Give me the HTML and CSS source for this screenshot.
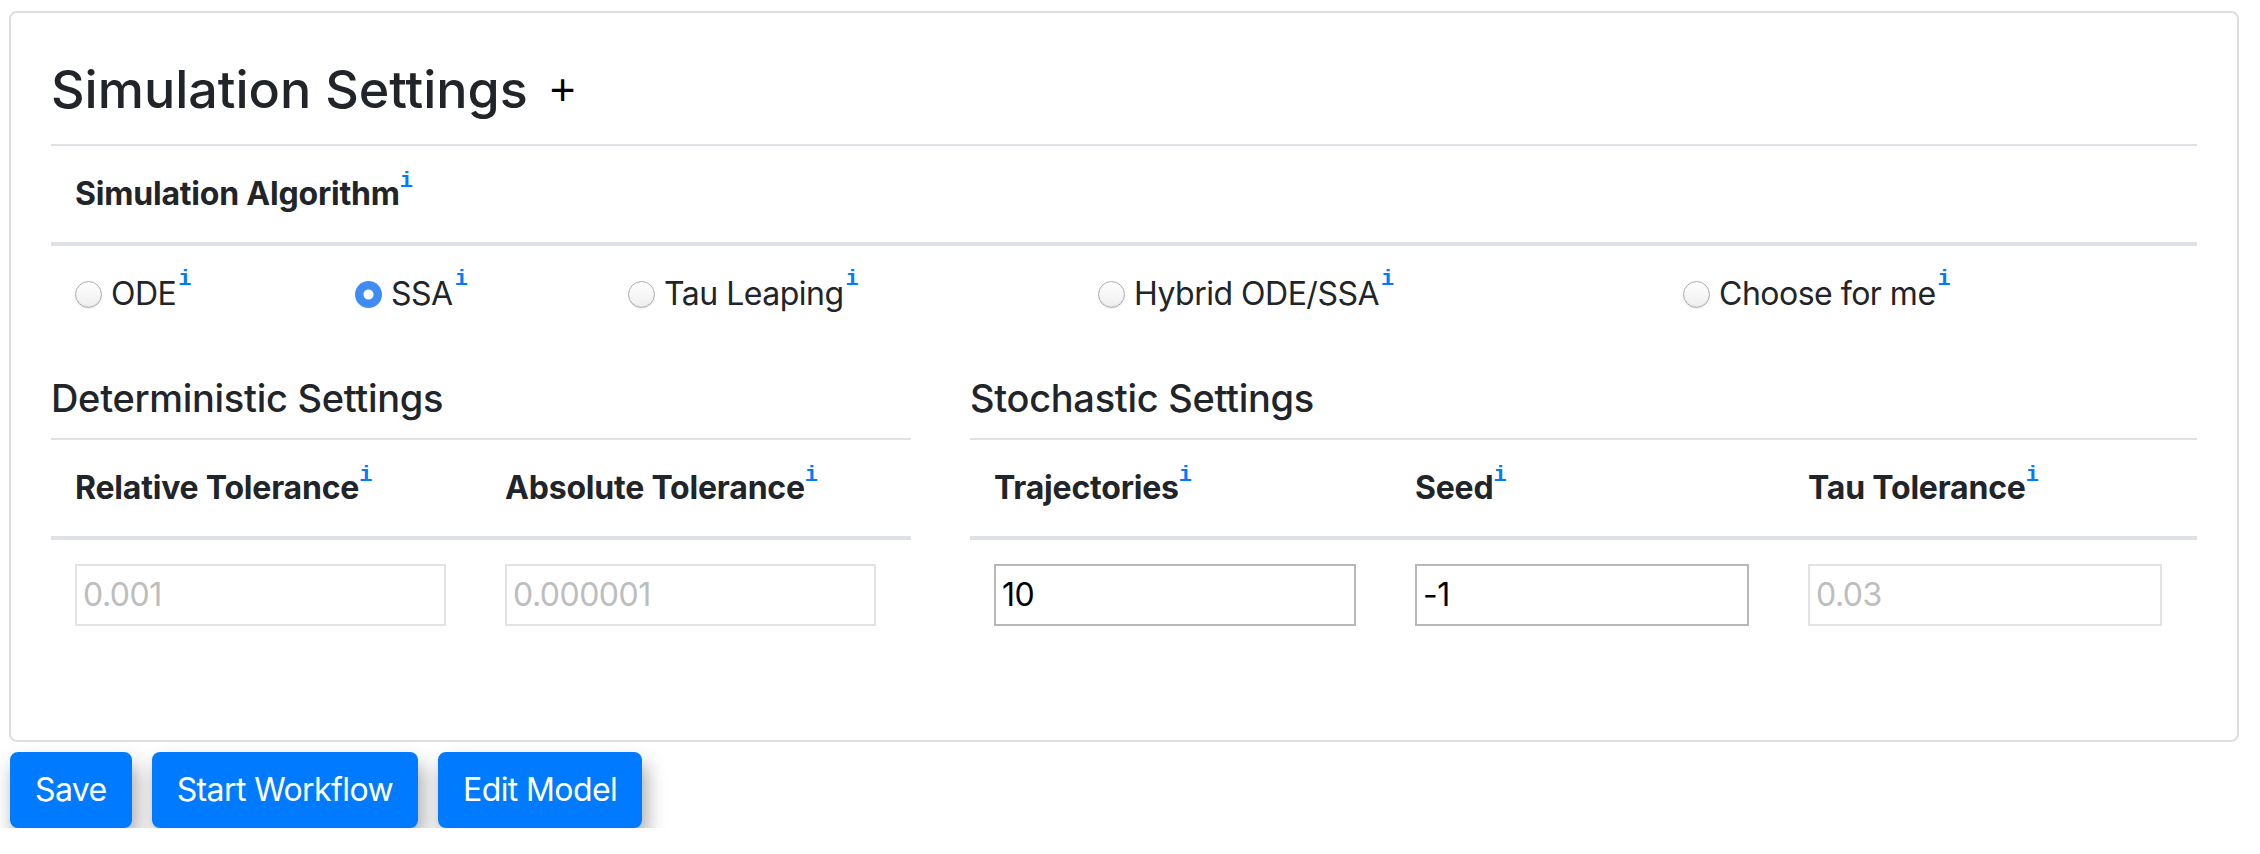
FILE: index.html
```html
<!DOCTYPE html>
<html lang="en">
<head>
<meta charset="utf-8">
<title>Simulation Settings</title>
<link rel="stylesheet" href="styles.css">
</head>
<body>
<div class="page">
  <div class="card">
    <div class="card-body">
      <div class="title-row">
        <h3 class="title">Simulation Settings</h3>
        <button class="collapse-btn" type="button">+</button>
      </div>

      <table class="table algo">
        <colgroup>
          <col class="a1"><col class="a2"><col class="a3"><col class="a4"><col class="a5">
        </colgroup>
        <thead>
          <tr><th colspan="5">Simulation Algorithm<sup class="info">i</sup></th></tr>
        </thead>
        <tbody>
          <tr>
            <td><label class="radio"><input type="radio" name="algo">ODE<sup class="info">i</sup></label></td>
            <td><label class="radio"><input type="radio" name="algo" checked>SSA<sup class="info">i</sup></label></td>
            <td><label class="radio"><input type="radio" name="algo">Tau Leaping<sup class="info">i</sup></label></td>
            <td><label class="radio"><input type="radio" name="algo">Hybrid ODE/SSA<sup class="info">i</sup></label></td>
            <td><label class="radio"><input type="radio" name="algo">Choose for me<sup class="info">i</sup></label></td>
          </tr>
        </tbody>
      </table>

      <div class="settings-row">
        <div class="col det">
          <h5 class="section-title">Deterministic Settings</h5>
          <table class="table settings">
            <thead>
              <tr>
                <th class="d1">Relative Tolerance<sup class="info">i</sup></th>
                <th class="d2">Absolute Tolerance<sup class="info">i</sup></th>
              </tr>
            </thead>
            <tbody>
              <tr>
                <td><input class="field" type="text" value="0.001" disabled></td>
                <td><input class="field" type="text" value="0.000001" disabled></td>
              </tr>
            </tbody>
          </table>
        </div>
        <div class="col sto">
          <h5 class="section-title">Stochastic Settings</h5>
          <table class="table settings">
            <thead>
              <tr>
                <th class="s1">Trajectories<sup class="info">i</sup></th>
                <th class="s2">Seed<sup class="info">i</sup></th>
                <th class="s3">Tau Tolerance<sup class="info">i</sup></th>
              </tr>
            </thead>
            <tbody>
              <tr>
                <td><input class="field" type="text" value="10"></td>
                <td><input class="field" type="text" value="-1"></td>
                <td><input class="field" type="text" value="0.03" disabled></td>
              </tr>
            </tbody>
          </table>
        </div>
      </div>
    </div>
  </div>

  <div class="actions">
    <button class="btn" type="button">Save</button>
    <button class="btn" type="button">Start Workflow</button>
    <button class="btn" type="button">Edit Model</button>
  </div>
</div>
</body>
</html>
```

FILE: styles.css
```css
* { box-sizing: border-box; }

html, body {
  margin: 0;
  padding: 0;
  background: #ffffff;
}

body {
  font-family: Inter, "Liberation Sans", Arial, sans-serif;
  font-size: 32px;
  line-height: 48px;
  letter-spacing: -0.5px;
  color: #212529;
}

.page {
  padding: 11px 0 0 9px;
}

.card {
  width: 2230px;
  border: 2px solid #dedede;
  border-radius: 8px;
  background: #fff;
}

.card-body {
  padding: 40px 40px 58px 40px;
}

.title-row {
  display: flex;
  align-items: flex-start;
  height: 91px;
  padding-top: 6px;
}

.title {
  margin: 0;
  font-size: 52px;
  line-height: 62px;
  font-weight: 500;
  letter-spacing: 0;
  color: #212529;
}

.collapse-btn {
  margin: 0 0 0 22px;
  padding: 0;
  border: 0;
  background: transparent;
  font-family: "Liberation Sans", Arial, sans-serif;
  font-size: 44px;
  line-height: 62px;
  font-weight: 400;
  color: #000;
}

.table {
  width: 100%;
  border-collapse: separate;
  border-spacing: 0;
  table-layout: fixed;
  margin-bottom: 32px;
}

.table.algo { margin-bottom: 29px; }

.table th {
  text-align: left;
  font-weight: 700;
  padding: 24px;
  line-height: 48px;
  letter-spacing: -0.2px;
  border-top: 2px solid #dee2e6;
  border-bottom: 4px solid #dee2e6;
}

.table td {
  padding: 24px;
  line-height: 48px;
  vertical-align: top;
}

.info {
  font-family: "Liberation Mono", "DejaVu Sans Mono", monospace;
  font-weight: 700;
  font-size: 22px;
  line-height: 0;
  letter-spacing: 0;
  color: #007bff;
  vertical-align: 18px;
  margin-left: 0;
}

.algo col.a1 { width: 280px; }
.algo col.a2 { width: 273px; }
.algo col.a3 { width: 470px; }
.algo col.a4 { width: 585px; }

.radio {
  display: inline-flex;
  align-items: center;
  white-space: nowrap;
}

.radio input {
  appearance: none;
  -webkit-appearance: none;
  width: 27px;
  height: 27px;
  margin: 0 9px 0 0;
  border-radius: 50%;
  border: 1px solid #adadad;
  background: linear-gradient(#ffffff, #eeeeee);
  box-shadow: inset 0 -1px 1px rgba(0, 0, 0, 0.06), 0 1px 1px rgba(0, 0, 0, 0.06);
  flex: 0 0 auto;
}

.radio input:checked {
  border: 0;
  background: radial-gradient(circle, #ffffff 0 4.5px, #3f8cf6 5.5px);
  box-shadow: none;
}

.radio .info {
  align-self: flex-start;
  line-height: 22px;
  margin-top: -1px;
  margin-left: 2px;
}

.settings-row {
  display: flex;
  gap: 59px;
}

.col.det { width: 860px; flex: 0 0 860px; }
.col.sto { flex: 1 1 auto; }

.section-title {
  margin: 0 0 16px 0;
  font-size: 38px;
  line-height: 48px;
  font-weight: 500;
  letter-spacing: -0.3px;
}

.settings .d1 { width: 430px; }
.settings .s1 { width: 421px; }
.settings .s2 { width: 393px; }

.field {
  display: block;
  width: calc(100% - 11px);
  height: 62px;
  margin: 0;
  padding: 0 6px;
  border: 2px solid #b7b7b7;
  border-radius: 0;
  background: #fff;
  font-family: Inter, "Liberation Sans", Arial, sans-serif;
  font-size: 32px;
  letter-spacing: -0.5px;
  color: #000;
  outline: none;
}

.field:disabled {
  border-color: #e3e3e3;
  color: #bdbdbd;
  background: #fff;
  -webkit-text-fill-color: #bdbdbd;
  opacity: 1;
}

.actions {
  display: flex;
  gap: 20px;
  margin-top: 10px;
  padding-left: 1px;
}

.btn {
  padding: 12px 23px;
  border: 2px solid #007bff;
  border-radius: 8px;
  background: #007bff;
  color: #fff;
  font-family: Inter, "Liberation Sans", Arial, sans-serif;
  font-size: 32px;
  line-height: 48px;
  font-weight: 400;
  letter-spacing: -0.6px;
  box-shadow: 4px 12px 20px rgba(0, 0, 0, 0.36);
}
```
